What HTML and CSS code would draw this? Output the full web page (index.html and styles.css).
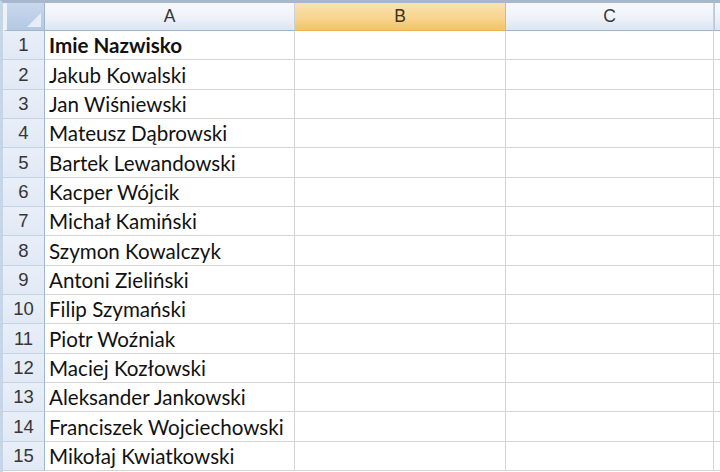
FILE: index.html
```html
<!DOCTYPE html>
<html lang="pl">

<head>
    <meta charset="UTF-8">
    <title>Arkusz1</title>
    <link rel="stylesheet" href="styles.css">
</head>

<body>
<div class="sheet">
    <div class="corner"><span class="corner__tri"></span></div>
    <div class="col-head">A</div>
    <div class="col-head col-head--active">B</div>
    <div class="col-head">C</div>
    <div class="col-head col-head--rest"></div>

    <div class="row-head">1</div><div class="cell cell--bold">Imie Nazwisko</div><div class="cell"></div><div class="cell"></div><div class="cell cell--rest"></div>
    <div class="row-head">2</div><div class="cell">Jakub Kowalski</div><div class="cell"></div><div class="cell"></div><div class="cell cell--rest"></div>
    <div class="row-head">3</div><div class="cell">Jan Wiśniewski</div><div class="cell"></div><div class="cell"></div><div class="cell cell--rest"></div>
    <div class="row-head">4</div><div class="cell">Mateusz Dąbrowski</div><div class="cell"></div><div class="cell"></div><div class="cell cell--rest"></div>
    <div class="row-head">5</div><div class="cell">Bartek Lewandowski</div><div class="cell"></div><div class="cell"></div><div class="cell cell--rest"></div>
    <div class="row-head">6</div><div class="cell">Kacper Wójcik</div><div class="cell"></div><div class="cell"></div><div class="cell cell--rest"></div>
    <div class="row-head">7</div><div class="cell">Michał Kamiński</div><div class="cell"></div><div class="cell"></div><div class="cell cell--rest"></div>
    <div class="row-head">8</div><div class="cell">Szymon Kowalczyk</div><div class="cell"></div><div class="cell"></div><div class="cell cell--rest"></div>
    <div class="row-head">9</div><div class="cell">Antoni Zieliński</div><div class="cell"></div><div class="cell"></div><div class="cell cell--rest"></div>
    <div class="row-head">10</div><div class="cell">Filip Szymański</div><div class="cell"></div><div class="cell"></div><div class="cell cell--rest"></div>
    <div class="row-head">11</div><div class="cell">Piotr Woźniak</div><div class="cell"></div><div class="cell"></div><div class="cell cell--rest"></div>
    <div class="row-head">12</div><div class="cell">Maciej Kozłowski</div><div class="cell"></div><div class="cell"></div><div class="cell cell--rest"></div>
    <div class="row-head">13</div><div class="cell">Aleksander Jankowski</div><div class="cell"></div><div class="cell"></div><div class="cell cell--rest"></div>
    <div class="row-head">14</div><div class="cell">Franciszek Wojciechowski</div><div class="cell"></div><div class="cell"></div><div class="cell cell--rest"></div>
    <div class="row-head">15</div><div class="cell">Mikołaj Kwiatkowski</div><div class="cell"></div><div class="cell"></div><div class="cell cell--rest"></div>
</div>
</body>

</html>
```

FILE: styles.css
```css
body {
  margin: 0;
  padding: 0;
  background-color: #FFFFFF;
  overflow: hidden;
}

.sheet {
  display: grid;
  grid-template-columns: 42px 250px 211px 208px 1fr;
  grid-template-rows: 28px repeat(15, 29.35px);
  height: 472px;
  border-top: 3px solid #A7B8CC;
  border-left: 3px solid #C6D5E8;
}

.corner {
  position: relative;
  background: linear-gradient(180deg, #C9D8EC 0%, #B4C8E3 100%);
  border-right: 1px solid #9EB6CE;
  border-bottom: 1px solid #9EB6CE;
  border-left: 4px solid #EEF2F7;
}

.corner__tri {
  position: absolute;
  right: 3px;
  bottom: 3px;
  width: 0;
  height: 0;
  border-left: 14px solid transparent;
  border-bottom: 14px solid #E6EDF6;
}

.col-head {
  display: flex;
  align-items: center;
  justify-content: center;
  background: linear-gradient(180deg, #F7F9FC 0%, #EEF2F8 55%, #DDE5EF 100%);
  border-right: 1px solid #C5D2E2;
  border-bottom: 1px solid #9EB6CE;
  font-family: "Liberation Sans", Arial, sans-serif;
  font-size: 17.5px;
  color: #363636;
}

.col-head--active {
  background: linear-gradient(180deg, #FBE2B0 0%, #F8D58F 55%, #F3C462 100%);
  border-right: 1px solid #F0B452;
  border-bottom: 1px solid #F0B452;
  color: #3A3320;
}

.col-head--rest {
  border-right: none;
  border-left: 1px solid #B9C7D8;
}

.row-head {
  display: flex;
  align-items: center;
  justify-content: center;
  background: linear-gradient(180deg, #E9EFF8 0%, #E1E9F5 100%);
  border-right: 1px solid #9EB6CE;
  border-bottom: 1px solid #C5D2E2;
  font-family: "Liberation Sans", Arial, sans-serif;
  font-size: 18.5px;
  color: #363636;
}

.cell {
  display: flex;
  align-items: center;
  padding-left: 4px;
  border-right: 1px solid #D4D4D4;
  border-bottom: 1px solid #D4D4D4;
  font-family: Lato, "Liberation Sans", sans-serif;
  font-size: 20.6px;
  color: #111111;
  white-space: nowrap;
}

.cell--bold {
  font-weight: 700;
}

.cell--rest {
  border-right: none;
}
```
